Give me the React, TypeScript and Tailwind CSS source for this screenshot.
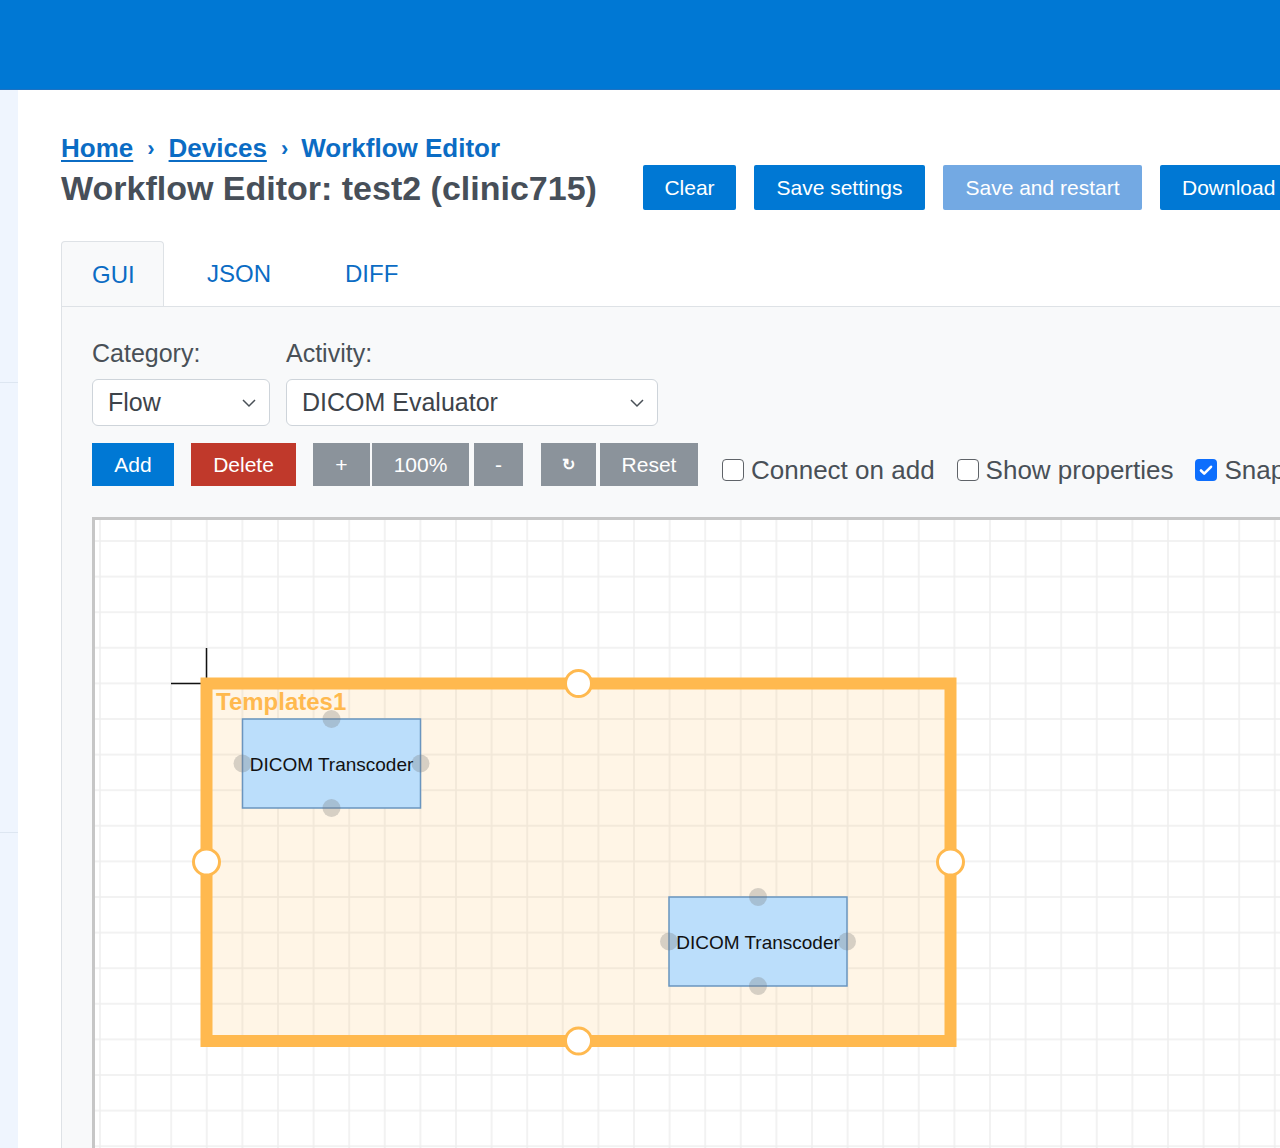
import React from 'react'

const FONT = { fontFamily: '"Liberation Sans", Arial, Helvetica, sans-serif' }

function Checkbox({ label, checked }: { label: string; checked?: boolean }) {
  return (
    <label className="flex items-center h-[22px] mt-[16px] gap-[7px] text-[26px] text-[#495057] whitespace-nowrap">
      {checked ? (
        <span className="w-[22px] h-[22px] rounded-[4px] bg-[#0d6efd] flex items-center justify-center flex-none">
          <svg width="16" height="16" viewBox="0 0 16 16">
            <path d="M3 8.5l3.2 3.2L13 4.8" fill="none" stroke="#fff" strokeWidth="2.6" strokeLinecap="round" strokeLinejoin="round" />
          </svg>
        </span>
      ) : (
        <span className="w-[22px] h-[22px] rounded-[4px] bg-white border border-[#5f6368] flex-none" />
      )}
      {label}
    </label>
  )
}

function Select({ value, width }: { value: string; width: string }) {
  return (
    <div className={`${width} h-[47px] bg-white border border-[#ced4da] rounded-[6px] flex items-center justify-between pl-[15px] pr-[12px] text-[25px] text-[#3d434a]`}>
      <span>{value}</span>
      <svg width="16" height="10" viewBox="0 0 16 10">
        <path d="M2 2l6 6 6-6" fill="none" stroke="#495057" strokeWidth="1.5" />
      </svg>
    </div>
  )
}

function Node({ x, y, label }: { x: number; y: number; label: string }) {
  const w = 178
  const h = 89
  const ports = [
    [x + w / 2, y],
    [x + w / 2, y + h],
    [x, y + h / 2],
    [x + w, y + h / 2],
  ]
  return (
    <g>
      <rect x={x} y={y} width={w} height={h} fill="#bbdefb" stroke="#6a95bf" strokeWidth="1.5" />
      {ports.map(([cx, cy], i) => (
        <circle key={i} cx={cx} cy={cy} r="9" fill="rgba(120,120,120,0.3)" />
      ))}
      <text x={x + w / 2} y={y + h / 2 + 7} textAnchor="middle" fontSize="19" fill="#111" style={FONT}>
        {label}
      </text>
    </g>
  )
}

function Canvas() {
  const orange = '#ffb94f'
  return (
    <div className="w-[1300px] h-[700px] flex-none border-l-[3px] border-t-[3px] border-[#c6c6c6] bg-white overflow-hidden">
      <svg width="1300" height="700" viewBox="95 520 1300 700">
        <defs>
          <pattern id="grid" x="99" y="540" width="35.6" height="35.6" patternUnits="userSpaceOnUse">
            <path d="M1 0V35.6M0 1H35.6" stroke="#eeeeee" strokeWidth="1.5" fill="none" />
          </pattern>
        </defs>
        <rect x="95" y="520" width="1300" height="700" fill="url(#grid)" />

        {/* selection crosshair */}
        <path d="M206.5 648V684M171 683.5H207" stroke="#111" strokeWidth="1.5" fill="none" />

        {/* group */}
        <rect x="206.5" y="683.5" width="744" height="357.5" fill="rgba(255,184,77,0.14)" stroke={orange} strokeWidth="12" />
        <text x="216" y="710" fontSize="24" fontWeight="bold" fill={orange} style={FONT}>
          Templates1
        </text>

        <Node x={242.5} y={719} label="DICOM Transcoder" />
        <Node x={669} y={897} label="DICOM Transcoder" />

        {[
          [578.5, 683.5],
          [206.5, 862],
          [950.5, 862],
          [578.5, 1041],
        ].map(([cx, cy], i) => (
          <circle key={i} cx={cx} cy={cy} r="13" fill="#fff" stroke={orange} strokeWidth="3" />
        ))}
      </svg>
    </div>
  )
}

export default function App() {
  return (
    <div className="w-[1280px] h-[1148px] overflow-hidden bg-white" style={FONT}>
      {/* Top bar */}
      <div className="h-[90px] bg-[#0078d4] border-b border-[#1f72c1]" />

      <div className="flex">
        {/* Sidebar */}
        <div className="w-[18px] h-[1058px] flex-none bg-[#eff5fe] flex flex-col">
          <div className="h-[293px] border-b border-[#dde6f1]" />
          <div className="h-[450px] border-b border-[#dde6f1]" />
        </div>

        {/* Main */}
        <div className="pl-[43px] pt-[43px] w-[1400px] flex-none">
          <div className="flex items-start">
            <div className="w-[582px] flex-none">
              <div className="flex items-center h-[30px] text-[26px] font-bold text-[#0b6cc4] whitespace-nowrap">
                <a className="underline underline-offset-[3px] decoration-2">Home</a>
                <span className="mx-[14px] text-[22px]">›</span>
                <a className="underline underline-offset-[3px] decoration-2">Devices</a>
                <span className="ml-[14px] mr-[13px] text-[22px]">›</span>
                <span>Workflow Editor</span>
              </div>
              <h1 className="mt-[5px] h-[40px] leading-[40px] text-[34px] font-bold text-[#474f59] whitespace-nowrap">
                Workflow Editor: test2 (clinic715)
              </h1>
            </div>
            <div className="flex gap-[18px] mt-[32px] text-[21px] text-white whitespace-nowrap">
              <button className="w-[93px] h-[45px] rounded-[2px] bg-[#0078d4]">Clear</button>
              <button className="w-[171px] h-[45px] rounded-[2px] bg-[#0078d4]">Save settings</button>
              <button className="w-[199px] h-[45px] rounded-[2px] bg-[#73a9e3]">Save and restart</button>
              <button className="h-[45px] px-[22px] rounded-[2px] bg-[#0078d4]">Download</button>
            </div>
          </div>

          {/* Tabs */}
          <div className="flex gap-[12px] mt-[31px] text-[24px] text-[#0b6cc4] relative z-10">
            <div className="h-[65px] -mb-px w-[103px] pl-[30px] pt-[2px] flex items-center bg-[#f8f9fa] border border-b-0 border-[#dee2e6] rounded-t-[4px]">
              GUI
            </div>
            <div className="h-[65px] pl-[31px] pr-[30px] flex items-center">JSON</div>
            <div className="h-[65px] pl-[32px] flex items-center">DIFF</div>
          </div>

          {/* Panel */}
          <div className="bg-[#f8f9fa] border-t border-l border-[#dee2e6] pl-[30px] pt-[31px] h-[900px]">
            <div className="flex gap-[16px]">
              <div className="flex flex-col">
                <label className="h-[30px] leading-[30px] text-[25px] text-[#495057]">Category:</label>
                <div className="mt-[11px]">
                  <Select value="Flow" width="w-[178px]" />
                </div>
              </div>
              <div className="flex flex-col">
                <label className="h-[30px] leading-[30px] text-[25px] text-[#495057]">Activity:</label>
                <div className="mt-[11px]">
                  <Select value="DICOM Evaluator" width="w-[372px]" />
                </div>
              </div>
            </div>

            <div className="flex items-start mt-[17px] text-[21px] text-white">
              <button className="w-[82px] h-[43px] bg-[#0078d4]">Add</button>
              <button className="w-[105px] h-[43px] ml-[17px] bg-[#c0392b]">Delete</button>
              <button className="w-[57px] h-[43px] ml-[17px] bg-[#8b939b]">+</button>
              <button className="w-[97px] h-[43px] ml-[2px] bg-[#8b939b]">100%</button>
              <button className="w-[49px] h-[43px] ml-[5px] bg-[#8b939b]">-</button>
              <button className="w-[55px] h-[43px] ml-[18px] bg-[#8b939b] text-[16px] font-bold">↻</button>
              <button className="w-[98px] h-[43px] ml-[4px] bg-[#8b939b]">Reset</button>
              <div className="flex gap-[22px] ml-[24px]">
                <Checkbox label="Connect on add" />
                <Checkbox label="Show properties" />
                <Checkbox label="Snap to grid" checked />
              </div>
            </div>

            <div className="mt-[31px]">
              <Canvas />
            </div>
          </div>
        </div>
      </div>
    </div>
  )
}
